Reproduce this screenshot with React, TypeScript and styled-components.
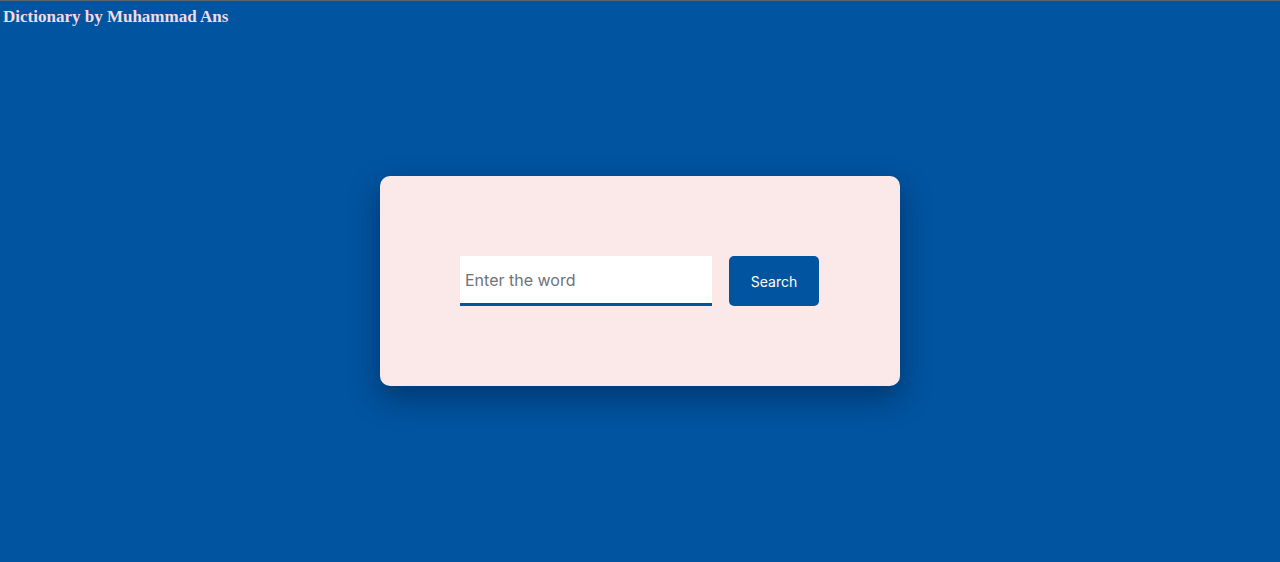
import { useState } from "react";
import styled, { createGlobalStyle } from "styled-components";

const GlobalStyle = createGlobalStyle`
    *{
        box-sizing: border-box;
    }

    body{
        margin: 0;
        background: #0054a0;
        border-top: 1px solid #5a6470;
    }
`;

export default function App() {
    const [Word, setWord] = useState<string>("");

    return (
        <>
            <GlobalStyle />
            <Page>
                <Title>Dictionary by Muhammad Ans</Title>
                <Card>
                    <Input
                        type="text"
                        placeholder="Enter the word"
                        value={Word}
                        onChange={(e) => setWord(e.target.value)}
                    />
                    <Button>Search</Button>
                </Card>
                <span></span>
            </Page>
        </>
    );
}

const Page = styled.div`
    height: calc(100vh - 2px);
    display: grid;
    grid-template-rows: 1fr auto 1fr;
    justify-items: center;
`;

const Title = styled.h1`
    justify-self: start;
    align-self: start;
    margin: 0;
    padding: 6px 3px;
    font-family: "Liberation Serif", "DejaVu Serif", serif;
    font-size: 17px;
    font-weight: 700;
    color: #f6d9e2;
`;

const Card = styled.div`
    width: 520px;
    height: 210px;
    padding: 80px;
    display: flex;
    align-items: flex-start;
    gap: 17px;
    background: #fbe9e9;
    border-radius: 10px;
    box-shadow: 0 12px 30px rgba(0, 20, 50, 0.45);
`;

const Input = styled.input`
    width: 252px;
    height: 50px;
    padding: 0 5px;
    border: none;
    border-bottom: 3px solid #0054a0;
    background: #ffffff;
    outline: none;
    font-family: "Inter", "Open Sans", sans-serif;
    font-size: 16px;
    color: #333;

    &::placeholder{
        color: #6e7378;
    }
`;

const Button = styled.button`
    width: 90px;
    height: 50px;
    border: none;
    border-radius: 5px;
    background: #0054a0;
    color: #ffffff;
    font-family: "Inter", "Open Sans", sans-serif;
    font-size: 14px;
    cursor: pointer;
`;
